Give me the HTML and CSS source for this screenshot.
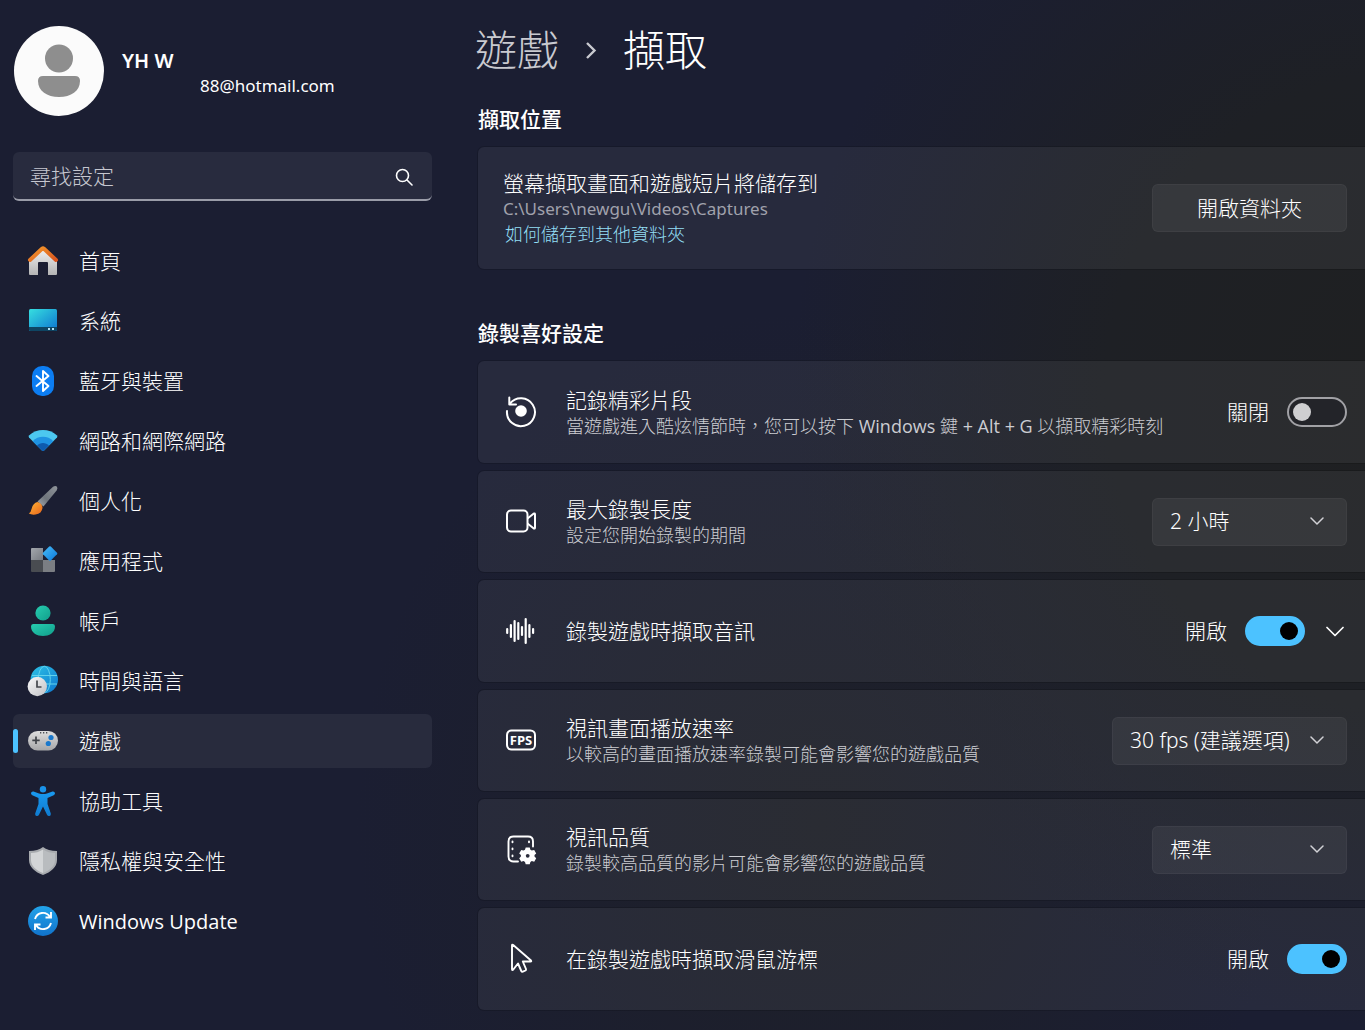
FILE: index.html
```html
<!DOCTYPE html>
<html lang="zh-Hant">
<head>
<meta charset="utf-8">
<meta name="viewport" content="width=device-width, initial-scale=1">
<title>設定 - 擷取</title>
<link rel="stylesheet" href="styles.css">
</head>
<body>
<div class="app">
  <aside class="sidebar">
    <div class="account">
      <svg class="avatar" viewBox="0 0 90 90" aria-hidden="true">
        <circle cx="45" cy="45" r="45" fill="#fbfbfb"/>
        <circle cx="45" cy="32.500" r="14" fill="#8e8e8e"/>
        <path d="M29 50H61Q66 50 66 55C66 65 57 71 45 71S24 65 24 55Q24 50 29 50Z" fill="#8e8e8e"/>
      </svg>
      <div class="account-text">
        <div class="account-name">YH W</div>
        <div class="account-mail">88@hotmail.com</div>
      </div>
    </div>

    <form class="search" role="search">
      <input class="search-input" type="search" placeholder="尋找設定" aria-label="尋找設定">
      <button class="search-button" type="button" aria-label="搜尋">
        <svg viewBox="0 0 18 18" width="18" height="18" fill="none" stroke="#fff" stroke-width="1.600" stroke-linecap="round"><circle cx="7.500" cy="7.500" r="6"/><path d="M12 12L17 17"/></svg>
      </button>
    </form>

    <nav class="nav">
      <a class="nav-item" href="#home">
        <svg class="nav-icon" viewBox="0 0 30 30" aria-hidden="true">
          <defs>
            <linearGradient id="wall" x1="0" y1="0" x2="0" y2="1"><stop offset="0" stop-color="#f0f0f0"/><stop offset="1" stop-color="#b4b4b4"/></linearGradient>
            <linearGradient id="roof" x1="0" y1="0" x2="1" y2="1"><stop offset="0" stop-color="#f59a2c"/><stop offset="1" stop-color="#d9541e"/></linearGradient>
          </defs>
          <path d="M15 3L29 15V28Q29 29 28 29H20V17Q20 16 19 16H11Q10 16 10 17V29H2Q1 29 1 28V15Z" fill="url(#wall)"/>
          <path d="M2 14L14 2.800Q15 2 16 2.800L28 14" fill="none" stroke="url(#roof)" stroke-width="4" stroke-linecap="round" stroke-linejoin="round"/>
        </svg>
        <span>首頁</span>
      </a>
      <a class="nav-item" href="#system">
        <svg class="nav-icon" viewBox="0 0 30 30" aria-hidden="true">
          <defs><linearGradient id="screen" x1="0" y1="0" x2="1" y2="1"><stop offset="0" stop-color="#36dfe0"/><stop offset="1" stop-color="#0d73cf"/></linearGradient></defs>
          <rect x="1" y="3" width="28" height="22" rx="1.500" fill="url(#screen)"/>
          <path d="M1 21H29V23.500Q29 25 27.500 25H2.500Q1 25 1 23.500Z" fill="#0e4563"/>
          <path d="M20 22h2v2h-2zM24 22h2v2h-2z" fill="#b5e2f5"/>
        </svg>
        <span>系統</span>
      </a>
      <a class="nav-item" href="#devices">
        <svg class="nav-icon" viewBox="0 0 30 30" aria-hidden="true">
          <rect x="4" y="0" width="22" height="30" rx="10" fill="#0c7df2"/>
          <path d="M8.500 10L20.500 20L15 25V5L20.500 10L8.500 20" fill="none" stroke="#fff" stroke-width="1.900" stroke-linejoin="round" stroke-linecap="round"/>
        </svg>
        <span>藍牙與裝置</span>
      </a>
      <a class="nav-item" href="#network">
        <svg class="nav-icon" viewBox="0 0 30 30" aria-hidden="true">
          <path d="M1 9.500C9 2.300 21 2.300 29 9.500Q29.800 10.500 29 11.500L16 24.500Q15 25.500 14 24.500L1 11.500Q.2 10.500 1 9.500Z" fill="#4cc8f0"/>
          <path d="M4.700 15.200C10 9.300 20 9.300 25.300 15.200L16 24.500Q15 25.500 14 24.500Z" fill="#1f93e3"/>
          <path d="M9 19.500C12 16 18 16 21 19.500L16 24.500Q15 25.500 14 24.500Z" fill="#0e5bae"/>
        </svg>
        <span>網路和網際網路</span>
      </a>
      <a class="nav-item" href="#personalization">
        <svg class="nav-icon" viewBox="0 0 30 30" aria-hidden="true">
          <defs>
            <linearGradient id="handle" x1="1" y1="0" x2="0" y2="1"><stop offset="0" stop-color="#8f949a"/><stop offset=".6" stop-color="#6f757c"/><stop offset="1" stop-color="#a5aab0"/></linearGradient>
            <linearGradient id="bristle" x1="0" y1="0" x2="1" y2="1"><stop offset="0" stop-color="#ffb637"/><stop offset="1" stop-color="#e8641b"/></linearGradient>
          </defs>
          <path d="M25 .8Q27.500 -.8 29 .8Q30 2.300 28.600 4.500L15.500 20.500L9.500 15.500Z" fill="url(#handle)"/>
          <path d="M9.500 16Q13.500 17 14.500 21Q14.500 27.500 7.500 28.500Q3.500 29 .8 27.500Q3 26.300 3.700 22.500Q5 17 9.500 16Z" fill="url(#bristle)"/>
        </svg>
        <span>個人化</span>
      </a>
      <a class="nav-item" href="#apps">
        <svg class="nav-icon" viewBox="0 0 30 30" aria-hidden="true">
          <defs>
            <linearGradient id="tile" x1="0" y1="0" x2="1" y2="1"><stop offset="0" stop-color="#a3a7ad"/><stop offset="1" stop-color="#777b82"/></linearGradient>
            <linearGradient id="gem" x1="0" y1="0" x2="1" y2="1"><stop offset="0" stop-color="#49bdf8"/><stop offset="1" stop-color="#0b78da"/></linearGradient>
          </defs>
          <path d="M4 2H15V14H3V3Q3 2 4 2Z" fill="url(#tile)"/>
          <path d="M3 14H15V26H4Q3 26 3 25Z" fill="#494c51"/>
          <path d="M15 14H27V25Q27 26 26 26H15Z" fill="#7b7e83"/>
          <path d="M21.200 .5Q22 -.2 22.800 .5L29 6.700Q29.700 7.500 29 8.300L22.800 14.500Q22 15.200 21.200 14.500L15 8.300Q14.300 7.500 15 6.700Z" fill="url(#gem)"/>
        </svg>
        <span>應用程式</span>
      </a>
      <a class="nav-item" href="#accounts">
        <svg class="nav-icon" viewBox="0 0 30 30" aria-hidden="true">
          <defs><linearGradient id="person" x1="0" y1="0" x2="1" y2="1"><stop offset="0" stop-color="#27cdb0"/><stop offset="1" stop-color="#119e8b"/></linearGradient></defs>
          <circle cx="15" cy="7" r="7.600" fill="url(#person)"/>
          <path d="M5 18H25Q27 18 27 20.500C27 27 21 30 15 30S3 27 3 20.500Q3 18 5 18Z" fill="url(#person)"/>
        </svg>
        <span>帳戶</span>
      </a>
      <a class="nav-item" href="#time">
        <svg class="nav-icon" viewBox="0 0 30 30" aria-hidden="true">
          <defs>
            <linearGradient id="globe" x1="0" y1="0" x2="1" y2="1"><stop offset="0" stop-color="#2cc3e6"/><stop offset="1" stop-color="#0e77cf"/></linearGradient>
            <linearGradient id="clock" x1="0" y1="0" x2="1" y2="1"><stop offset="0" stop-color="#fafafa"/><stop offset="1" stop-color="#bfc0c4"/></linearGradient>
          </defs>
          <circle cx="16.300" cy="13.500" r="13.700" fill="url(#globe)"/>
          <g fill="none" stroke="#62d3ec" stroke-width="1"><ellipse cx="16.300" cy="13.500" rx="6" ry="13.200"/><path d="M4 9.500H29M4 18H29"/></g>
          <circle cx="9.300" cy="20.500" r="9.700" fill="url(#clock)"/>
          <path d="M9 14.500V21H13.500" fill="none" stroke="#45484d" stroke-width="1.700"/>
        </svg>
        <span>時間與語言</span>
      </a>
      <a class="nav-item nav-item-active" href="#gaming" aria-current="page">
        <svg class="nav-icon" viewBox="0 0 30 30" aria-hidden="true">
          <defs><linearGradient id="pad" x1="0" y1="0" x2="0" y2="1"><stop offset="0" stop-color="#dedede"/><stop offset="1" stop-color="#a6a6a8"/></linearGradient></defs>
          <rect x="0" y="5" width="30" height="19.500" rx="9.700" fill="url(#pad)"/>
          <path d="M8 10.500V18M4.300 14.300H11.700" stroke="#3f4248" stroke-width="1.700" fill="none"/>
          <path d="M12 6h1.300v1.500H12zM15 6h1.300v1.500H15zM18 6h1.300v1.500H18z" fill="#4d5056"/>
          <circle cx="23" cy="11.500" r="2.600" fill="#1a78cc"/><circle cx="20.300" cy="17.500" r="2.600" fill="#1a78cc"/>
        </svg>
        <span>遊戲</span>
      </a>
      <a class="nav-item" href="#accessibility">
        <svg class="nav-icon" viewBox="0 0 30 30" aria-hidden="true">
          <defs><linearGradient id="figure" x1="0" y1="0" x2="0" y2="1"><stop offset="0" stop-color="#1a9af0"/><stop offset="1" stop-color="#0f7bd0"/></linearGradient></defs>
          <circle cx="15" cy="3.200" r="3.200" fill="#1a93ea"/>
          <path d="M5.500 5.500L11 7.500Q15 8.500 19 7.500L24.500 5.500Q26.500 5.200 27 7Q27.200 8.500 25.700 9.300L19.500 12V18L22.800 27.500Q23.200 29.500 21.500 30Q19.800 30.300 19 28.700L15 20.500L11 28.700Q10.200 30.300 8.500 30Q6.800 29.500 7.200 27.500L10.500 18V12L4.300 9.300Q2.800 8.500 3 7Q3.500 5.200 5.500 5.500Z" fill="url(#figure)"/>
        </svg>
        <span>協助工具</span>
      </a>
      <a class="nav-item" href="#privacy">
        <svg class="nav-icon" viewBox="0 0 30 30" aria-hidden="true">
          <path d="M15 1Q20 5 29 5V14C29 21 23 26 15 29C7 26 1 21 1 14V5Q10 5 15 1Z" fill="#a8abaf"/>
          <path d="M15 3.500Q9.500 7 3 7V14C3 20 8 24.300 15 27Z" fill="#d3d5d7"/>
          <path d="M15 3.500Q20.500 7 27 7V14C27 20 22 24.300 15 27Z" fill="#b9bcbf"/>
        </svg>
        <span>隱私權與安全性</span>
      </a>
      <a class="nav-item" href="#update">
        <svg class="nav-icon" viewBox="0 0 30 30" aria-hidden="true">
          <defs><linearGradient id="disc" x1="0" y1="0" x2="0" y2="1"><stop offset="0" stop-color="#22a3ea"/><stop offset="1" stop-color="#1173cb"/></linearGradient></defs>
          <circle cx="15" cy="15" r="15" fill="url(#disc)"/>
          <path d="M7 13C9 6 18 4.500 22 11M23 6V11.500H17.500M23 17C21 24 12 25.500 8 19M7 24V18.500H12.500" fill="none" stroke="#fff" stroke-width="1.900"/>
        </svg>
        <span class="latin">Windows Update</span>
      </a>
    </nav>
  </aside>

  <main class="main">
    <h1 class="breadcrumb">
      <a class="crumb" href="#gaming">遊戲</a>
      <svg class="crumb-arrow" viewBox="0 0 12 18" width="12" height="18" fill="none" stroke="#c9cad0" stroke-width="2.400" aria-hidden="true"><path d="M2 2L9.500 9.500L2 17"/></svg>
      <span>擷取</span>
    </h1>

    <section class="section">
      <h2 class="section-title">擷取位置</h2>
      <div class="card card-location">
        <div class="card-text">
          <div class="card-title">螢幕擷取畫面和遊戲短片將儲存到</div>
          <div class="card-path">C:\Users\newgu\Videos\Captures</div>
          <a class="card-link" href="#help">如何儲存到其他資料夾</a>
        </div>
        <button class="button" type="button">開啟資料夾</button>
      </div>
    </section>

    <section class="section">
      <h2 class="section-title">錄製喜好設定</h2>
      <div class="card-list">
        <div class="card">
          <svg class="card-icon" viewBox="0 0 30 30" fill="none" stroke="#fff" stroke-width="2" stroke-linecap="round" stroke-linejoin="round" aria-hidden="true">
            <path d="M4 6.500A14 14 0 1 1 1 14M3.300 .5V7.500H10"/><circle cx="15" cy="14" r="5.800" fill="#fff" stroke="none"/>
          </svg>
          <div class="card-text">
            <label class="card-title" for="highlights">記錄精彩片段</label>
            <div class="card-note">當遊戲進入酷炫情節時，您可以按下 <span class="latin">Windows</span> 鍵 <span class="latin">+ Alt + G</span> 以擷取精彩時刻</div>
          </div>
          <div class="control"><span>關閉</span><input class="toggle" id="highlights" type="checkbox" role="switch"></div>
        </div>

        <div class="card card-choice">
          <svg class="card-icon" viewBox="0 0 30 30" fill="none" stroke="#fff" stroke-width="2" stroke-linejoin="round" aria-hidden="true">
            <rect x="1" y="3.500" width="20.500" height="21" rx="4"/><path d="M21.500 11.500L27.500 6.700Q29 5.800 29 7.500V20.500Q29 22.200 27.500 21.300L21.500 16.500"/>
          </svg>
          <div class="card-text">
            <label class="card-title" for="length">最大錄製長度</label>
            <div class="card-note">設定您開始錄製的期間</div>
          </div>
          <div class="select-box">
            <select class="select" id="length"><option>2 小時</option></select>
            <svg class="select-arrow" viewBox="0 0 14 9" aria-hidden="true"><path d="M1 1L7 7L13 1"/></svg>
          </div>
        </div>

        <div class="card">
          <svg class="card-icon" viewBox="0 0 30 30" fill="none" stroke="#fff" stroke-width="2.200" stroke-linecap="round" aria-hidden="true">
            <path d="M1.200 13V17M4.900 9V21M8.600 5V25M12.300 7V23M16 11V19M19.700 3V27M23.400 9V21M27.100 13V17"/>
          </svg>
          <div class="card-text"><label class="card-title" for="audio">錄製遊戲時擷取音訊</label></div>
          <div class="control">
            <span>開啟</span><input class="toggle" id="audio" type="checkbox" role="switch" checked>
            <button class="expander" type="button" aria-label="展開">
              <svg viewBox="0 0 18 11" width="18" height="11" fill="none" stroke="#fff" stroke-width="1.700" stroke-linecap="round" stroke-linejoin="round"><path d="M1 1.500L9 9.500L17 1.500"/></svg>
            </button>
          </div>
        </div>

        <div class="card card-choice">
          <svg class="card-icon" viewBox="0 0 30 30" aria-hidden="true">
            <rect x="1" y="4.500" width="28" height="19" rx="4.500" fill="none" stroke="#fff" stroke-width="2"/>
            <text class="fps" x="15" y="18.500" text-anchor="middle">FPS</text>
          </svg>
          <div class="card-text">
            <label class="card-title" for="rate">視訊畫面播放速率</label>
            <div class="card-note">以較高的畫面播放速率錄製可能會影響您的遊戲品質</div>
          </div>
          <div class="select-box">
            <select class="select" id="rate"><option>30 fps (建議選項)</option></select>
            <svg class="select-arrow" viewBox="0 0 14 9" aria-hidden="true"><path d="M1 1L7 7L13 1"/></svg>
          </div>
        </div>

        <div class="card card-choice">
          <svg class="card-icon" viewBox="0 0 30 30" fill="none" stroke="#fff" stroke-width="1.900" stroke-linecap="round" aria-hidden="true">
            <path d="M27 11.500V6.500Q27 1.500 22 1.500H7.500Q2.500 1.500 2.500 6.500V21.500Q2.500 26.500 7.500 26.500H12M6.500 6.500V7.300M6.500 13.500V14.300M6.500 20.500V21.300M23 6.500V7.300"/>
            <path d="M19.700 12.500h4l.7 2.300 1.400.8 2.400-.6 2 3.400-1.700 1.700v1.500l1.700 1.700-2 3.400-2.400-.6-1.400.8-.7 2.300h-4l-.7-2.300-1.400-.8-2.400.6-2-3.400 1.700-1.700v-1.500l-1.700-1.700 2-3.400 2.400.6 1.400-.8z" fill="#fff" stroke="none"/>
            <circle cx="21.700" cy="20.800" r="1.900" fill="#292b3a" stroke="none"/>
          </svg>
          <div class="card-text">
            <label class="card-title" for="quality">視訊品質</label>
            <div class="card-note">錄製較高品質的影片可能會影響您的遊戲品質</div>
          </div>
          <div class="select-box">
            <select class="select" id="quality"><option>標準</option></select>
            <svg class="select-arrow" viewBox="0 0 14 9" aria-hidden="true"><path d="M1 1L7 7L13 1"/></svg>
          </div>
        </div>

        <div class="card">
          <svg class="card-icon" viewBox="0 0 30 30" fill="none" stroke="#fff" stroke-width="1.900" stroke-linejoin="round" aria-hidden="true">
            <path d="M6 1.500Q6 0 7.200 1L25 16.500Q25.700 17.500 24.500 17.500H16.800L20 25Q20.300 26 19.500 26.500L16.800 27.700Q15.800 28 15.300 27L12 19.500L7.300 25.500Q6 26.800 6 25Z"/>
          </svg>
          <div class="card-text"><label class="card-title" for="cursor">在錄製遊戲時擷取滑鼠游標</label></div>
          <div class="control"><span>開啟</span><input class="toggle" id="cursor" type="checkbox" role="switch" checked></div>
        </div>
      </div>
    </section>
  </main>
</div>
</body>
</html>
```
FILE: styles.css
```css
* {
  box-sizing: border-box;
}

body {
  margin: 0;
  min-height: 100vh;
  color: #fff;
  background:
    radial-gradient(ellipse 46% 62% at 104% 38%, #1f2021 0%, #1e2025 50%, rgba(28, 31, 42, 0) 100%),
    radial-gradient(ellipse 34% 50% at 60% 80%, #1e2028 0%, rgba(28, 31, 44, 0) 100%),
    #1b1e32;
  font: 300 21px/27px "Noto Sans", "Noto Sans CJK TC", sans-serif;
}

button,
input,
select {
  font: inherit;
  color: inherit;
}

.app {
  display: grid;
  grid-template-columns: 419px minmax(0, 1fr);
  column-gap: 46px;
  padding-left: 13px;
}

.latin {
  font-family: "Open Sans", sans-serif;
  font-weight: 400;
}

/* Sidebar */
.account {
  display: flex;
  gap: 18px;
  padding: 26px 0 0 1px;
}

.avatar {
  width: 90px;
  height: 90px;
}

.account-text {
  padding-top: 21px;
}

.account-name {
  font-size: 20px;
  font-weight: 600;
}

.account-mail {
  padding-left: 78px;
  font-size: 17px;
  font-weight: 400;
  line-height: 24px;
}

.search {
  display: flex;
  align-items: center;
  height: 49px;
  margin-top: 36px;
  padding-top: 2px;
  border-bottom: 2px solid #9a9ca8;
  border-radius: 6px;
  background: #282b3e;
}

.search-input {
  flex: 1;
  min-width: 0;
  padding: 0 0 0 17px;
  border: 0;
  outline: 0;
  background: none;
  appearance: none;
}

.search-input::placeholder {
  color: #c6c7d0;
}

.search-button,
.expander {
  display: flex;
  padding: 0;
  border: 0;
  background: none;
}

.search-button {
  margin-right: 19px;
}

.nav {
  display: grid;
  gap: 6px;
  margin-top: 33px;
}

.nav-item {
  position: relative;
  display: flex;
  align-items: center;
  gap: 21px;
  height: 54px;
  padding-left: 15px;
  border-radius: 6px;
  color: inherit;
  text-decoration: none;
}

.nav-item .latin {
  font-size: 20px;
}

.nav-item-active {
  background: #282b3d;
}

.nav-item-active::before {
  content: "";
  position: absolute;
  top: 15px;
  left: 0;
  width: 5px;
  height: 24px;
  border-radius: 3px;
  background: #4cc2ff;
}

.nav-icon {
  width: 30px;
  height: 30px;
  overflow: visible;
}

/* Main column */
.breadcrumb {
  display: flex;
  align-items: center;
  gap: 26px;
  margin: 0 0 0 -3px;
  padding-top: 22px;
  font-size: 42px;
  font-weight: 300;
  line-height: 56px;
}

.crumb {
  color: #c9cad0;
  text-decoration: none;
}

.section {
  padding-top: 28px;
}

.section + .section {
  padding-top: 51px;
}

.section-title {
  margin: 0;
  font-size: 21px;
  font-weight: 500;
  line-height: 27px;
}

.card-list {
  display: grid;
  gap: 8px;
}

.section-title + * {
  margin-top: 14px;
}

.card {
  display: flex;
  align-items: center;
  gap: 30px;
  min-height: 102px;
  padding: 0 18px 0 28px;
  border-radius: 6px 0 0 6px;
  background: rgba(255, 255, 255, 0.055);
  box-shadow: 0 0 0 1px rgba(0, 0, 0, 0.15);
}

.card-choice {
  min-height: 101px;
}

.card-location {
  min-height: 122px;
  padding-left: 25px;
}

.card-icon {
  flex: none;
  width: 30px;
  height: 30px;
  overflow: visible;
}

.card-text {
  flex: 1;
  min-width: 0;
}

.card-title {
  display: block;
}

.card-note,
.card-path,
.card-link {
  display: block;
  font-size: 18px;
  line-height: 24px;
}

.card-note {
  color: #cccdd2;
}

.card-path {
  color: #a0a1ac;
  font-size: 17px;
  font-weight: 400;
}

.card-link {
  padding-left: 2px;
  color: #93dff5;
  line-height: 26px;
  text-decoration: none;
}

.fps {
  fill: #fff;
  font: 700 13px "Open Sans", sans-serif;
}

.button,
.select {
  height: 48px;
  border: 1px solid rgba(255, 255, 255, 0.04);
  border-radius: 6px;
  background: rgba(255, 255, 255, 0.06);
}

.button {
  width: 195px;
}

.select-box {
  display: grid;
  align-items: center;
}

.select,
.select-arrow {
  grid-area: 1 / 1;
}

.select {
  min-width: 195px;
  padding: 0 56px 0 17px;
  appearance: none;
}

.select-arrow {
  justify-self: end;
  width: 14px;
  height: 9px;
  margin-right: 23px;
  fill: none;
  stroke: #d2d2d6;
  stroke-width: 1.5;
  stroke-linecap: round;
  pointer-events: none;
}

.control {
  display: flex;
  align-items: center;
  gap: 18px;
}

.expander {
  margin: 0 3px;
}

.toggle {
  display: flex;
  align-items: center;
  width: 60px;
  height: 30px;
  margin: 0;
  padding: 0 4px;
  border: 2px solid #a1a1a5;
  border-radius: 15px;
  background: #232429;
  appearance: none;
}

.toggle::before {
  content: "";
  width: 18px;
  height: 18px;
  border-radius: 50%;
  background: #cfcfd1;
}

.toggle:checked {
  justify-content: flex-end;
  padding-right: 5px;
  border-color: #4cc2ff;
  background: #4cc2ff;
}

.toggle:checked::before {
  background: #000;
}
```
